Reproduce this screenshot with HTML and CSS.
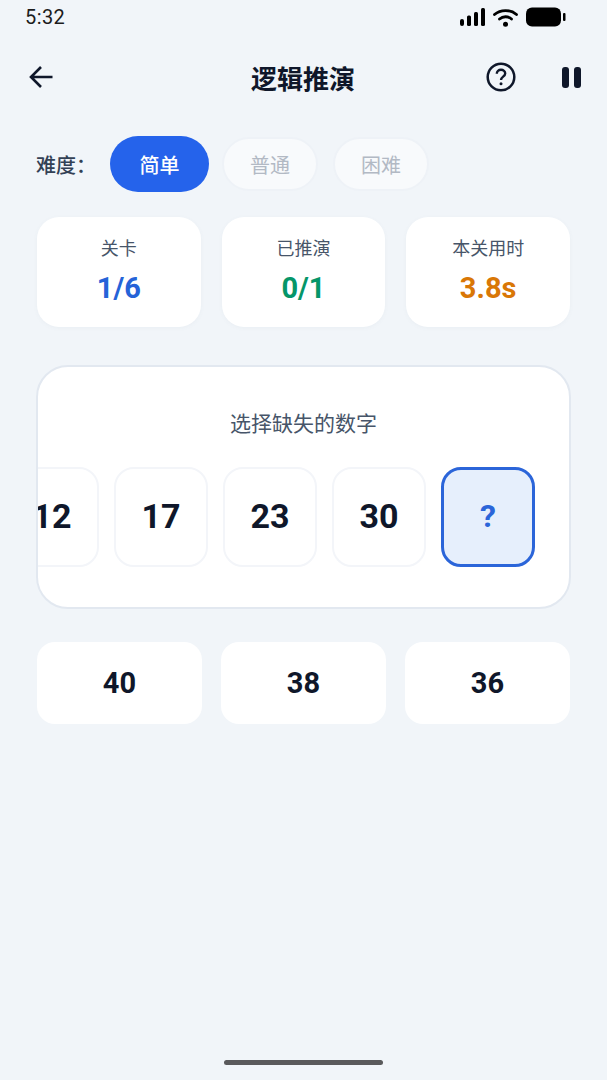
FILE: index.html
```html
<!DOCTYPE html>
<html lang="zh">
<head>
    <meta charset="utf-8">
    <title>逻辑推演</title>
    <link rel="stylesheet" href="styles.css">
</head>
<body>
    <div class="screen">

        <!-- Status bar -->
        <div class="status_bar">
            <span class="status_time">5:32</span>
            <div class="status_icons">
                <svg width="25" height="18" viewBox="0 0 25 18">
                    <rect x="0" y="11" width="4" height="7" rx="2" fill="#000"/>
                    <rect x="7" y="7.500" width="4" height="10.500" rx="1.500" fill="#000"/>
                    <rect x="14" y="4" width="4" height="14" rx="1.500" fill="#000"/>
                    <rect x="21" y="0" width="4" height="18" rx="1.500" fill="#000"/>
                </svg>
                <svg width="25" height="19" viewBox="0 0 25 19">
                    <path d="M1.500 6.500 C7.500 1.200 17.500 1.200 23.500 6.500" fill="none" stroke="#000" stroke-width="2.800" stroke-linecap="round"/>
                    <path d="M6.500 11 C10 8 15 8 18.500 11" fill="none" stroke="#000" stroke-width="2.800" stroke-linecap="round"/>
                    <circle cx="12.500" cy="16.300" r="2.500" fill="#000"/>
                </svg>
                <svg width="40" height="20" viewBox="0 0 40 20">
                    <rect x="0" y="0.500" width="35" height="19" rx="6" fill="#000"/>
                    <rect x="37" y="6" width="2.500" height="8" rx="1" fill="#000"/>
                </svg>
            </div>
        </div>

        <!-- Header -->
        <div class="top_bar">
            <svg class="back_icon" width="26" height="26" viewBox="0 0 26 26">
                <path d="M24.500 13 H3.500 M13 3 L3 13 L13 23" fill="none" stroke="#0f172a" stroke-width="2.600"/>
            </svg>
            <h1 class="page_title">逻辑推演</h1>
            <svg class="help_icon" width="30" height="30" viewBox="0 0 30 30">
                <circle cx="15" cy="15" r="13.300" fill="none" stroke="#0f172a" stroke-width="2.500"/>
                <path d="M10.800 11.800 C10.800 9.300 12.600 7.800 15 7.800 C17.400 7.800 19.200 9.400 19.200 11.500 C19.200 14.500 15 14.800 15 18" fill="none" stroke="#0f172a" stroke-width="2.400"/>
                <circle cx="15" cy="21.800" r="1.500" fill="#0f172a"/>
            </svg>
            <div class="pause_icon"><span></span><span></span></div>
        </div>

        <!-- Difficulty -->
        <div class="difficulty">
            <span class="difficulty_label">难度：</span>
            <div class="pill active">简单</div>
            <div class="pill">普通</div>
            <div class="pill">困难</div>
        </div>

        <!-- Stats -->
        <div class="stats">
            <div class="stat_card">
                <div class="stat_name">关卡</div>
                <div class="stat_value blue">1/6</div>
            </div>
            <div class="stat_card">
                <div class="stat_name">已推演</div>
                <div class="stat_value green">0/1</div>
            </div>
            <div class="stat_card">
                <div class="stat_name">本关用时</div>
                <div class="stat_value orange">3.8s</div>
            </div>
        </div>

        <!-- Sequence -->
        <div class="panel">
            <div class="panel_title">选择缺失的数字</div>
            <div class="sequence">
                <div class="tile">12</div>
                <div class="tile">17</div>
                <div class="tile">23</div>
                <div class="tile">30</div>
                <div class="tile missing">?</div>
            </div>
        </div>

        <!-- Answers -->
        <div class="answers">
            <div class="answer">40</div>
            <div class="answer">38</div>
            <div class="answer">36</div>
        </div>

        <div class="home_bar"></div>
    </div>
</body>
</html>
```

FILE: styles.css
```css
* {
    box-sizing: border-box;
}

body {
    margin: 0;
    background-color: #f1f5f9;
    font-family: Roboto, "Noto Sans CJK SC", sans-serif;
    color: #0f172a;
}

.screen {
    height: 1080px;
    display: flex;
    flex-direction: column;
    overflow: hidden;
}

/* Status bar */
.status_bar {
    height: 34px;
    padding: 0 41px 0 25px;
    display: flex;
    align-items: center;
    justify-content: space-between;
}

.status_time {
    font-size: 20px;
    letter-spacing: 0.4px;
    color: #1c1c1c;
}

.status_icons {
    display: flex;
    align-items: center;
    gap: 8px;
}

/* Header */
.top_bar {
    height: 86px;
    padding: 0 26px 0 28px;
    display: flex;
    align-items: center;
}

.page_title {
    flex: 1;
    margin: 0;
    padding-left: 66px;
    font-size: 26px;
    font-weight: 700;
    text-align: center;
}

.help_icon {
    margin-right: 46px;
}

.pause_icon {
    width: 19px;
    display: flex;
    justify-content: space-between;
}

.pause_icon span {
    width: 7px;
    height: 21px;
    border-radius: 3px;
    background-color: #0f172a;
}

/* Difficulty */
.difficulty {
    height: 56px;
    margin-top: 16px;
    padding-left: 36px;
    display: flex;
    align-items: center;
}

.difficulty_label {
    width: 74px;
    font-size: 20px;
    font-weight: 500;
    color: #334155;
}

.pill {
    width: 96px;
    height: 54px;
    margin-right: 15px;
    border: 2px solid #eef2f7;
    border-radius: 27px;
    background-color: #f8fafc;
    color: #b2b9c4;
    font-size: 20px;
    display: flex;
    align-items: center;
    justify-content: center;
}

.pill.active {
    width: 99px;
    height: 56px;
    margin-right: 13px;
    border: none;
    border-radius: 28px;
    background-color: #2563eb;
    color: #fff;
    font-weight: 500;
}

/* Stats */
.stats {
    margin-top: 25px;
    padding: 0 37px;
    display: grid;
    grid-template-columns: repeat(3, 1fr);
    gap: 21px;
}

.stat_card {
    height: 110px;
    padding-top: 20px;
    border-radius: 22px;
    background-color: #fff;
    box-shadow: 0 1px 4px rgba(100, 116, 139, 0.05);
    text-align: center;
}

.stat_name {
    font-size: 18px;
    line-height: 24px;
    color: #475569;
}

.stat_value {
    margin-top: 9px;
    font-size: 29px;
    line-height: 36px;
    font-weight: 700;
}

.blue {
    color: #2563d8;
}

.green {
    color: #059669;
}

.orange {
    color: #d97706;
}

/* Sequence panel */
.panel {
    height: 244px;
    margin: 38px 36px 0;
    padding-top: 43px;
    border: 2px solid #e2e8f0;
    border-radius: 32px;
    background-color: #fff;
    overflow: hidden;
}

.panel_title {
    font-size: 21px;
    line-height: 28px;
    color: #475569;
    text-align: center;
}

.sequence {
    margin-top: 29px;
    padding-right: 34px;
    display: flex;
    justify-content: flex-end;
    gap: 15px;
}

.tile {
    flex: 0 0 94px;
    height: 100px;
    padding-bottom: 3px;
    border: 2px solid #f3f5f9;
    border-radius: 20px;
    background-color: #fff;
    font-size: 34px;
    font-weight: 700;
    display: flex;
    align-items: center;
    justify-content: center;
}

.tile.missing {
    border: 3px solid #2b65d9;
    background-color: #e6effc;
    color: #2b65d9;
    font-size: 32px;
}

/* Answers */
.answers {
    margin-top: 33px;
    padding: 0 37px;
    display: grid;
    grid-template-columns: repeat(3, 1fr);
    gap: 19px;
}

.answer {
    height: 82px;
    border-radius: 18px;
    background-color: #fff;
    font-size: 29px;
    font-weight: 700;
    display: flex;
    align-items: center;
    justify-content: center;
}

.home_bar {
    width: 159px;
    height: 5px;
    margin: auto auto 15px;
    border-radius: 3px;
    background-color: #5a5a5c;
}
```
